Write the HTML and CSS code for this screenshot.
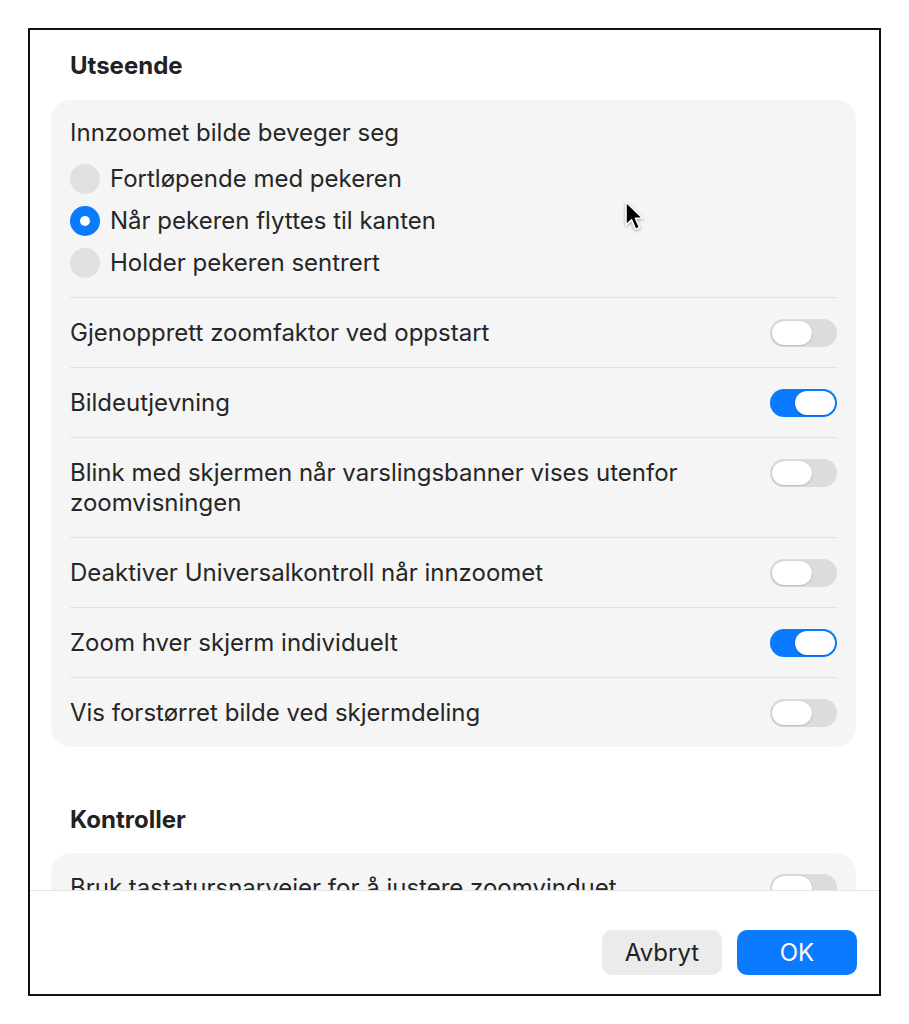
FILE: index.html
```html
<!DOCTYPE html>
<html lang="nb">
<head>
    <meta charset="UTF-8">
    <meta name="viewport" content="width=device-width, initial-scale=1.0">
    <title>Zoom – Avansert</title>
    <link rel="stylesheet" href="styles.css">
</head>
<body>
    <div class="sheet">
        <div class="sheet-body">
            <h2 class="section-title">Utseende</h2>
            <div class="card">
                <div class="group">
                    <div class="group-label">Innzoomet bilde beveger seg</div>
                    <label class="radio"><span class="dot"></span>Fortløpende med pekeren</label>
                    <label class="radio"><span class="dot checked"></span>Når pekeren flyttes til kanten</label>
                    <label class="radio"><span class="dot"></span>Holder pekeren sentrert</label>
                </div>
                <div class="row">
                    <span class="row-label">Gjenopprett zoomfaktor ved oppstart</span>
                    <span class="switch"></span>
                </div>
                <div class="row">
                    <span class="row-label">Bildeutjevning</span>
                    <span class="switch on"></span>
                </div>
                <div class="row">
                    <span class="row-label wrap">Blink med skjermen når varslingsbanner vises utenfor zoomvisningen</span>
                    <span class="switch"></span>
                </div>
                <div class="row">
                    <span class="row-label">Deaktiver Universalkontroll når innzoomet</span>
                    <span class="switch"></span>
                </div>
                <div class="row">
                    <span class="row-label">Zoom hver skjerm individuelt</span>
                    <span class="switch on"></span>
                </div>
                <div class="row">
                    <span class="row-label">Vis forstørret bilde ved skjermdeling</span>
                    <span class="switch"></span>
                </div>
            </div>

            <h2 class="section-title second">Kontroller</h2>
            <div class="card">
                <div class="row">
                    <span class="row-label">Bruk tastatursnarveier for å justere zoomvinduet</span>
                    <span class="switch"></span>
                </div>
                <div class="row">
                    <span class="row-label">Bruk rullegest med modifikatortaster for å zoome</span>
                    <span class="switch"></span>
                </div>
            </div>
        </div>
        <div class="sheet-footer">
            <button class="btn">Avbryt</button>
            <button class="btn primary">OK</button>
        </div>
    </div>

    <svg class="pointer" width="22" height="34" viewBox="0 0 22 34">
        <path d="M2 2 L2 25 L7.5 19.8 L11.6 29.2 L15.6 27.4 L11.5 18.3 L18.6 18.3 Z" fill="#000" stroke="#fff" stroke-width="1.6" stroke-linejoin="round"/>
    </svg>
</body>
</html>
```

FILE: styles.css
```css
body {
    margin: 0;
    background: #fff;
    font-family: Inter, "Noto Sans", "Liberation Sans", sans-serif;
    color: #262626;
}
.sheet {
    position: relative;
    box-sizing: border-box;
    margin: 28px 0 0 28px;
    width: 853px;
    height: 968px;
    border: 2px solid #111;
    background: #fff;
    display: flex;
    flex-direction: column;
}
.sheet-body {
    box-sizing: border-box;
    flex: none;
    height: 860px;
    overflow: hidden;
    padding: 21px 23px 0 21px;
}
.section-title {
    margin: 0 0 19px 19px;
    font-size: 24px;
    line-height: 30px;
    font-weight: 700;
    color: #222;
}
.section-title.second {
    margin-top: 58px;
    margin-bottom: 18px;
}
.card {
    background: #f5f5f5;
    border-radius: 20px;
    padding: 0 19px;
}
.group {
    padding: 18px 0 19px;
    border-bottom: 1px solid #e2e2e2;
    display: flex;
    flex-direction: column;
    gap: 12px;
}
.group-label,
.radio,
.row-label {
    font-size: 24px;
    line-height: 30px;
}
.group-label {
    margin-bottom: 4px;
}
.radio {
    display: flex;
    align-items: center;
    gap: 10px;
}
.dot {
    width: 30px;
    height: 30px;
    border-radius: 50%;
    background: #e0e0e0;
    display: flex;
    align-items: center;
    justify-content: center;
}
.dot.checked {
    background: #0a7aff;
}
.dot.checked::after {
    content: "";
    width: 10px;
    height: 10px;
    border-radius: 50%;
    background: #fff;
}
.row {
    display: flex;
    justify-content: space-between;
    align-items: flex-start;
    padding: 20px 0 19px;
    border-bottom: 1px solid #e2e2e2;
}
.row:last-child {
    border-bottom: none;
}
.row-label.wrap {
    max-width: 620px;
}
.switch {
    position: relative;
    flex: none;
    width: 67px;
    height: 28px;
    margin-top: 1px;
    border-radius: 14px;
    background: #dcdcdc;
}
.switch::after {
    content: "";
    position: absolute;
    top: 2px;
    left: 2px;
    width: 40px;
    height: 24px;
    border-radius: 12px;
    background: #fff;
    box-shadow: 0 0 1px rgba(0, 0, 0, 0.25), 0 1px 2px rgba(0, 0, 0, 0.12);
}
.switch.on {
    background: #0a7aff;
}
.switch.on::after {
    left: 25px;
}
.sheet-footer {
    flex: 1;
    border-top: 1px solid #e4e4e4;
    display: flex;
    justify-content: flex-end;
    align-items: flex-start;
    gap: 15px;
    padding: 39px 22px 0 0;
}
.btn {
    width: 120px;
    height: 45px;
    border: none;
    border-radius: 10px;
    background: #ebebeb;
    color: #222;
    font-family: inherit;
    font-size: 24px;
    cursor: pointer;
}
.btn.primary {
    background: #0a7aff;
    color: #fff;
}
.pointer {
    position: absolute;
    left: 624px;
    top: 200px;
    filter: drop-shadow(0 1px 1.5px rgba(0, 0, 0, 0.35));
}
```
